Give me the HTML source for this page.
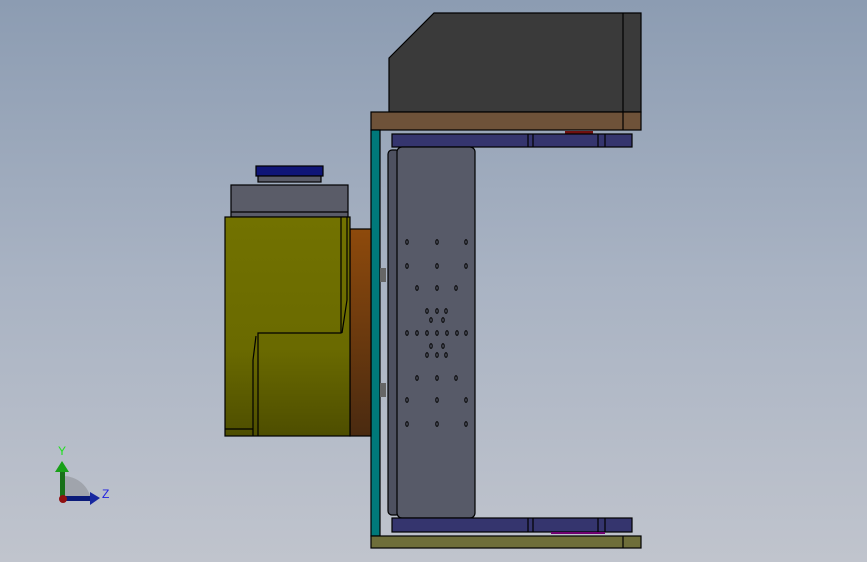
<!DOCTYPE html>
<html><head><meta charset="utf-8"><style>
html,body{margin:0;padding:0;width:867px;height:562px;overflow:hidden}
body{background:linear-gradient(#8c9cb2,#a9b3c3 50%,#c0c4cd)}
svg{position:absolute;left:0;top:0}
</style></head><body>
<svg width="867" height="562" viewBox="0 0 867 562" stroke="#000" stroke-width="1.2">
<defs>
<linearGradient id="yl" x1="0" y1="0" x2="0" y2="1"><stop offset="0" stop-color="#727200"/><stop offset="0.6" stop-color="#6a6a00"/><stop offset="1" stop-color="#4e4e00"/></linearGradient>
<linearGradient id="or" x1="0" y1="0" x2="0" y2="1"><stop offset="0" stop-color="#8e4a0c"/><stop offset="1" stop-color="#4a2a10"/></linearGradient>
</defs>
<!-- top box -->
<polygon points="389,58 434,13 641,13 641,112 389,112" fill="#3a3a3a"/>
<line x1="623" y1="13" x2="623" y2="112"/>
<!-- brown plate -->
<rect x="371" y="112" width="270" height="18" fill="#6e5239"/>
<line x1="623" y1="112" x2="623" y2="130"/>
<rect x="565" y="131" width="28" height="3" fill="#701010" stroke="none"/>
<!-- teal -->
<rect x="371" y="130" width="9" height="406" fill="#00797a"/>
<rect x="380" y="268" width="6" height="14" fill="#666" stroke="none"/>
<rect x="380" y="383" width="6" height="14" fill="#666" stroke="none"/>
<!-- top blue bar -->
<rect x="392" y="134" width="240" height="13" fill="#35356e"/>
<line x1="528" y1="134" x2="528" y2="147"/><line x1="533" y1="134" x2="533" y2="147"/>
<line x1="598" y1="134" x2="598" y2="147"/><line x1="605" y1="134" x2="605" y2="147"/>
<!-- gray plate -->
<rect x="388" y="150" width="12" height="365" rx="4" fill="#4e5160"/>
<rect x="397" y="147" width="78" height="371" rx="5" fill="#575a68"/>
<g fill="none" stroke-width="1">
<ellipse cx="407" cy="242" rx="1.2" ry="2.3"/><ellipse cx="437" cy="242" rx="1.2" ry="2.3"/><ellipse cx="466" cy="242" rx="1.2" ry="2.3"/>
<ellipse cx="407" cy="266" rx="1.2" ry="2.3"/><ellipse cx="437" cy="266" rx="1.2" ry="2.3"/><ellipse cx="466" cy="266" rx="1.2" ry="2.3"/>
<ellipse cx="417" cy="288" rx="1.2" ry="2.3"/><ellipse cx="437" cy="288" rx="1.2" ry="2.3"/><ellipse cx="456" cy="288" rx="1.2" ry="2.3"/>
<ellipse cx="427" cy="311" rx="1.2" ry="2.3"/><ellipse cx="437" cy="311" rx="1.2" ry="2.3"/><ellipse cx="446" cy="311" rx="1.2" ry="2.3"/>
<ellipse cx="431" cy="320" rx="1.2" ry="2.3"/><ellipse cx="443" cy="320" rx="1.2" ry="2.3"/>
<ellipse cx="407" cy="333" rx="1.2" ry="2.3"/><ellipse cx="417" cy="333" rx="1.2" ry="2.3"/><ellipse cx="427" cy="333" rx="1.2" ry="2.3"/><ellipse cx="437" cy="333" rx="1.2" ry="2.3"/><ellipse cx="447" cy="333" rx="1.2" ry="2.3"/><ellipse cx="457" cy="333" rx="1.2" ry="2.3"/><ellipse cx="466" cy="333" rx="1.2" ry="2.3"/>
<ellipse cx="431" cy="346" rx="1.2" ry="2.3"/><ellipse cx="443" cy="346" rx="1.2" ry="2.3"/>
<ellipse cx="427" cy="355" rx="1.2" ry="2.3"/><ellipse cx="437" cy="355" rx="1.2" ry="2.3"/><ellipse cx="446" cy="355" rx="1.2" ry="2.3"/>
<ellipse cx="417" cy="378" rx="1.2" ry="2.3"/><ellipse cx="437" cy="378" rx="1.2" ry="2.3"/><ellipse cx="456" cy="378" rx="1.2" ry="2.3"/>
<ellipse cx="407" cy="400" rx="1.2" ry="2.3"/><ellipse cx="437" cy="400" rx="1.2" ry="2.3"/><ellipse cx="466" cy="400" rx="1.2" ry="2.3"/>
<ellipse cx="407" cy="424" rx="1.2" ry="2.3"/><ellipse cx="437" cy="424" rx="1.2" ry="2.3"/><ellipse cx="466" cy="424" rx="1.2" ry="2.3"/>
</g>
<!-- bottom blue bar -->
<rect x="392" y="518" width="240" height="14" fill="#35356e"/>
<line x1="528" y1="518" x2="528" y2="532"/><line x1="533" y1="518" x2="533" y2="532"/>
<line x1="598" y1="518" x2="598" y2="532"/><line x1="605" y1="518" x2="605" y2="532"/>
<rect x="551" y="532" width="54" height="2" fill="#700070" stroke="none"/>
<!-- olive bottom plate -->
<rect x="371" y="536" width="270" height="12" fill="#6e6e3a"/>
<line x1="623" y1="536" x2="623" y2="548"/>
<!-- motor -->
<rect x="256" y="166" width="67" height="10" fill="#0f1577"/>
<rect x="258" y="176" width="63" height="6" fill="#5a5c68"/>
<rect x="231" y="185" width="117" height="32" fill="#5a5c68"/>
<line x1="231" y1="212" x2="348" y2="212"/>
<rect x="350" y="229" width="21" height="207" fill="url(#or)"/>
<rect x="225" y="217" width="125" height="219" fill="url(#yl)"/>
<polyline points="341,217 341,333 258,333 258,436" fill="none"/>
<polyline points="347,217 347,300 342,333" fill="none"/>
<polyline points="256,336 253,360 253,436" fill="none"/>
<line x1="225" y1="429" x2="253" y2="429"/>
<!-- triad -->
<g stroke="none">
<path d="M63 476 L63 500 L91 500 A28 28 0 0 0 63 476Z" fill="#a0a4ac"/>
<rect x="60" y="470" width="5" height="30" fill="#187018"/>
<polygon points="55,472 62,461 69,472" fill="#18a018"/>
<rect x="63" y="496" width="28" height="5" fill="#0a1a78"/>
<polygon points="90,492 100,498 90,505" fill="#1828a0"/>
<circle cx="63" cy="499" r="4" fill="#901010"/>
<text x="58" y="455" font-family="Liberation Sans,sans-serif" font-size="12" fill="#20e020">Y</text>
<text x="102" y="498" font-family="Liberation Sans,sans-serif" font-size="12" fill="#2020e0">Z</text>
</g>
</svg>
</body></html>
